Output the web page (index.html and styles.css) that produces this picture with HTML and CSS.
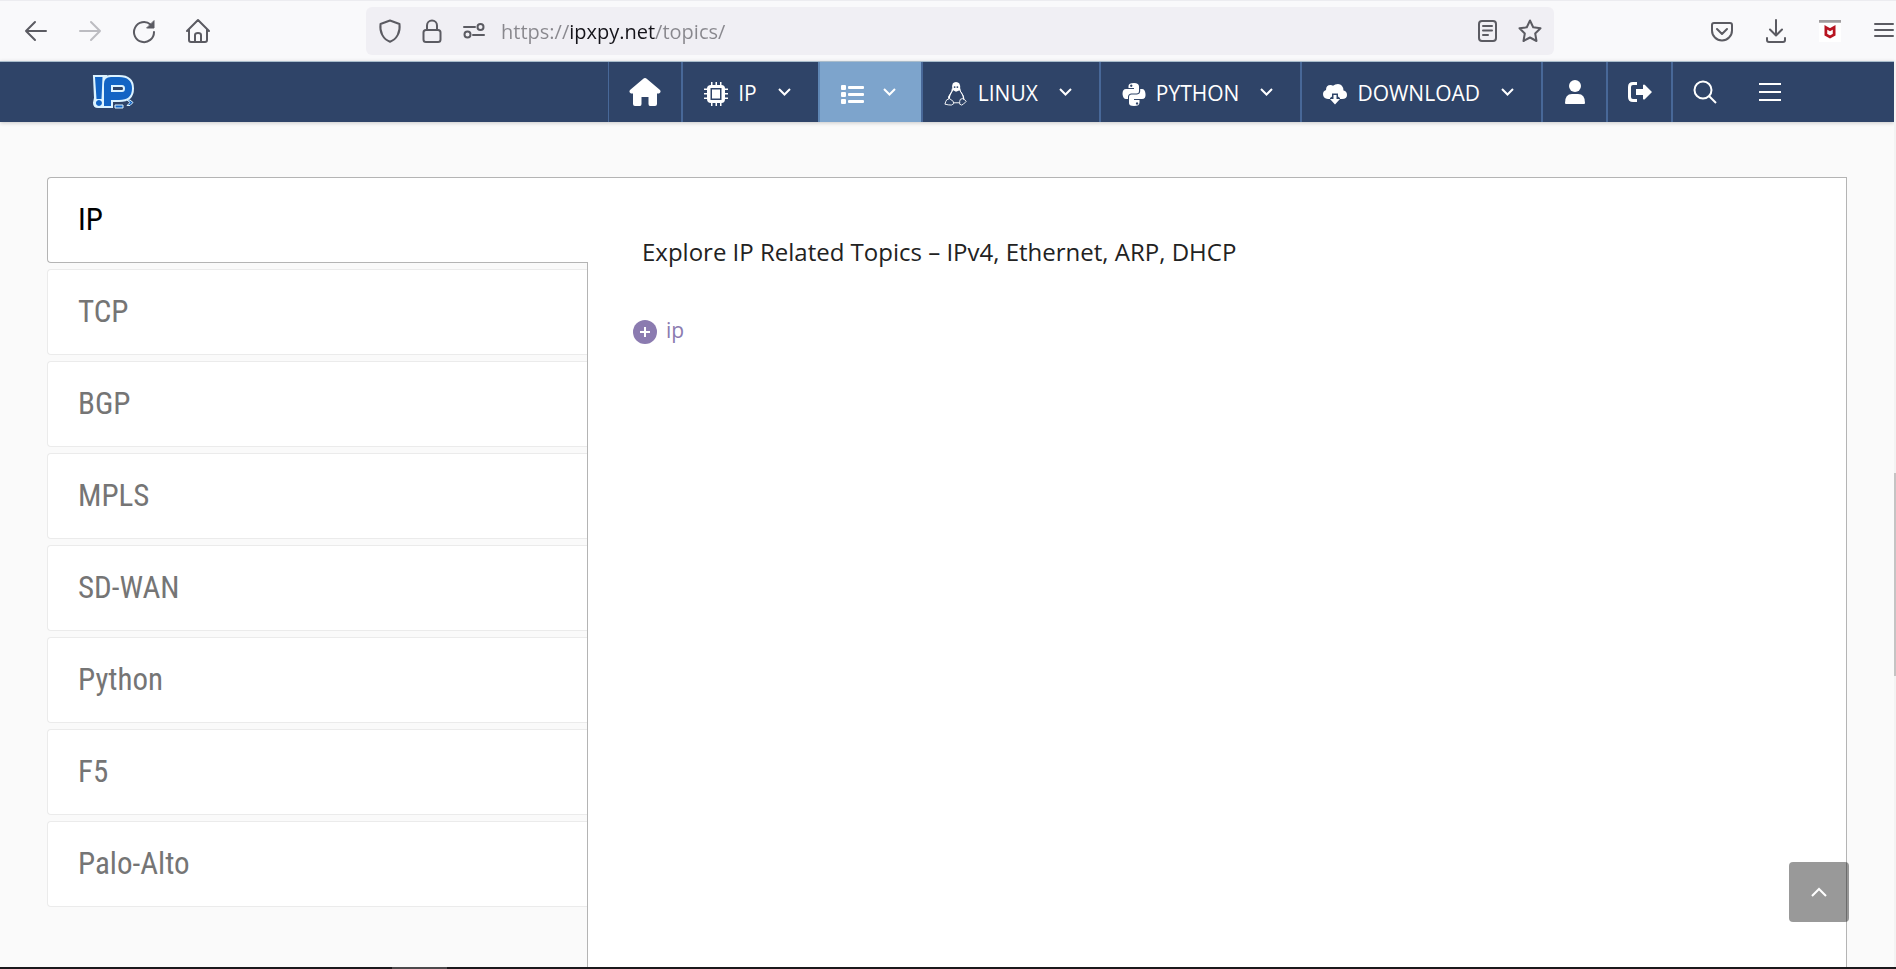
FILE: index.html
```html
<!DOCTYPE html>
<html lang="en">
<head>
<meta charset="utf-8">
<title>Topics</title>
<link rel="stylesheet" href="styles.css">
</head>
<body>
<div class="browser-bar">
  <div class="tools">
    <button class="tool" aria-label="Back"><svg viewBox="0 0 22 22"><path d="M21 11H1M10 2L1 11l9 9"/></svg></button>
    <button class="tool tool-off" aria-label="Forward"><svg viewBox="0 0 22 22"><path d="M1 11h20M12 2l9 9-9 9"/></svg></button>
    <button class="tool" aria-label="Reload"><svg viewBox="0 0 22 22"><path d="M21 12a10 10 0 1 1-3.500-7.500"/><path class="solid" d="M21 1v7h-7z"/></svg></button>
    <button class="tool" aria-label="Home"><svg viewBox="0 0 22 22"><path d="M0 11L11 0l11 11M2 9.500V20q0 2 2 2h14q2 0 2-2V9.500M8 21.500V15q0-2 3-2t3 2v6.500"/></svg></button>
  </div>
  <div class="address">
    <button class="tool" aria-label="Tracking protection"><svg viewBox="0 0 22 24"><path d="M11 1.500L20.500 5C21.500 13 18 20 11 22.800C4 20 .5 13 1.500 5z"/></svg></button>
    <button class="tool" aria-label="Site security"><svg viewBox="0 0 22 24"><rect x="2.500" y="11" width="17" height="12" rx="2.500"/><path d="M6 11V6.500a5 5 0 0 1 10 0V11"/></svg></button>
    <button class="tool" aria-label="Permissions"><svg viewBox="0 0 22 24"><path d="M1 8h11M10 16h11"/><circle cx="17.500" cy="8" r="3"/><circle cx="4.500" cy="15.500" r="3"/></svg></button>
    <input class="url" type="text" aria-label="Address" value="https://ipxpy.net/topics/">
    <button class="tool" aria-label="Reader view"><svg viewBox="0 0 22 24"><rect x="3" y="2" width="17" height="20" rx="3"/><path d="M7 7h9M7 11.500h9M7 16h5"/></svg></button>
    <button class="tool tool-star" aria-label="Bookmark"><svg viewBox="0 0 24 24"><path d="M12 1.500l3.200 6.800 7.300 1-5.300 5.200 1.300 7.500-6.500-3.500L5.500 22l1.300-7.500L1.500 9.300l7.300-1z"/></svg></button>
  </div>
  <div class="tools">
    <button class="tool" aria-label="Save to Pocket"><svg viewBox="0 0 22 22"><path d="M3 3h16q2 0 2 2v5.500a10 10 0 0 1-20 0V5q0-2 2-2zM6 9l5 5 5-5"/></svg></button>
    <button class="tool" aria-label="Downloads"><svg viewBox="0 0 22 22"><path d="M11 0v15M5 9.500l6 6 6-6M2 18v2q0 2 2 2h14q2 0 2-2v-2"/></svg></button>
    <button class="tool" aria-label="Web advisor"><svg viewBox="0 0 24 24"><path class="white" d="M0 3h24v21H0z"/><path class="grey" d="M0 0h24v3H0z"/><path class="red" d="M7.500 8L12 10.500l4.500-2.500v8L12 18.500l-4.500-2.500z"/></svg></button>
    <button class="tool" aria-label="Menu"><svg viewBox="0 0 22 22"><path d="M2 4h18M2 10h18M2 16h18"/></svg></button>
  </div>
</div>

<nav class="site-nav">
  <a class="brand" href="#" aria-label="IP home"><svg viewBox="0 0 44 36"><path class="halo" d="M3 3h10v29h-1L6 32q-3 0-3-3l1-5zM12 32V9q0-6 6-6h9q13 0 13 11.500T27 26h-8v6z"/><path class="mark" d="M3 3h7.500L9.500 25h-5zM7 26a3 3 0 1 1-.1 0z"/><path class="mark" d="M12 32V10q0-7 7-7h8q13 0 13 11.500T27 26h-8v6z"/><path class="hole" d="M20 12h10q2 0 2 2.500t-2 2.500H20z"/><path class="trail" d="M23 31h8v3h-8zM35 26h3l3 2.500-3 3h-3l3-3z"/></svg></a>
  <ul class="menu">
    <li><a class="item item-home" href="#" aria-label="Home"><svg class="home-icon" viewBox="0 0 32 28"><path d="M16 0q1 0 2 1l13 11q1.500 2-1 3.500h-2V26q0 2-2 2h-5q-1.500 0-1.500-2v-7h-7v7q0 2-1.500 2H6q-2 0-2-2V15.500H2Q-.5 14 1 12L14 1q1-1 2-1z"/></svg></a></li>
    <li><a class="item" href="#"><svg class="icon" viewBox="0 0 24 24"><path fill-rule="evenodd" d="M7 0h1.500v3h3V0H13v3h3V0h1.500v3q3.500 0 3.500 3.500h3V8h-3v3h3v1.500h-3v3h3V17h-3q0 4-3.500 4v3H16v-3h-3v3h-1.500v-3h-3v3H7v-3q-4 0-4-4H0v-1.500h3v-3H0V11h3V8H0V6.500h3Q3 3 7 3zM6.500 6v12h11V6zM8 7.500h8v9H8z"/></svg><span>IP</span><svg class="chevron" viewBox="0 0 13 8"><path d="M1 1l5.500 5.500L12 1"/></svg></a></li>
    <li><a class="item item-active" href="#" aria-label="Topics"><svg class="icon" viewBox="0 0 24 24"><rect x="0" y="3" width="5" height="5" rx="1"/><rect x="0" y="10" width="5" height="5" rx="1"/><rect x="0" y="17" width="5" height="5" rx="1"/><rect x="7" y="4" width="16" height="3" rx="1"/><rect x="7" y="11" width="16" height="3" rx="1"/><rect x="7" y="18" width="16" height="3" rx="1"/></svg><svg class="chevron" viewBox="0 0 13 8"><path d="M1 1l5.500 5.500L12 1"/></svg></a></li>
    <li><a class="item" href="#"><svg class="icon" viewBox="0 0 24 26"><path class="thin" d="M8 7q0 3-2 6-2.500 3-2 5M16 7q0 3 2 5 3 4 2.500 7M9.500 22.500h6M5 18q-4 1-4 3l-1 3q4 1 7 1 4-1 2-4zM19 18q-3 0-3 3v3q2 2 4 0l3-3q-1-2-4-3z"/><path d="M8 7Q7 0 12 0t4.500 7q0 3 2 5 3 4 2.500 7l-1.500-1q0-4-3.500-9l-4 1.500L9 9q-4 6-3.500 9l-2-.5Q3.500 15 6 12q2-2 2-5z"/><circle class="eye" cx="10.500" cy="5.500" r="1"/><circle class="eye" cx="13.500" cy="5.500" r="1"/></svg><span>LINUX</span><svg class="chevron" viewBox="0 0 13 8"><path d="M1 1l5.500 5.500L12 1"/></svg></a></li>
    <li><a class="item" href="#"><svg class="icon" viewBox="0 0 24 24"><path fill-rule="evenodd" d="M12 1q5 0 5 3.500V9q0 2.500-2.500 2.500H9Q6 12 6 15v2H4q-3 0-3.500-5Q.5 7 4 7h8V6H6.500V4Q6.500 1 12 1zM9.200 2.500a1.200 1.200 0 1 0 .1 0z"/><path fill-rule="evenodd" d="M18.200 7H20q3 0 3.500 5t-3.500 5h-8v1h5.500v2.500q0 3.500-5.500 3.500T7 20.500V15q0-2.500 2.500-2.500H15Q18.200 12 18.200 9zM15 20.300a1.200 1.200 0 1 0 .1 0z"/></svg><span>PYTHON</span><svg class="chevron" viewBox="0 0 13 8"><path d="M1 1l5.500 5.500L12 1"/></svg></a></li>
    <li><a class="item" href="#"><svg class="icon" viewBox="0 0 24 24"><path d="M5 17q-5-.5-5-5 0-3 3-4Q3 3 7.500 3q1.500 0 2.500.8Q12 2 15 2q5 0 5.500 6.500Q24 9 24 13q0 4-5 4h-2v-1l-2-1.500v-3H9v3L7 16v1z"/><path d="M10.500 13h3v4H17l-5 5.500L7 17h3.500z"/></svg><span>DOWNLOAD</span><svg class="chevron" viewBox="0 0 13 8"><path d="M1 1l5.500 5.500L12 1"/></svg></a></li>
    <li><a class="item item-small" href="#" aria-label="Account"><svg class="icon" viewBox="0 0 24 24"><circle cx="12" cy="6" r="6"/><path d="M2 23q0-9 7-9h6q7 0 7 9 0 1-1 1H3q-1 0-1-1z"/></svg></a></li>
    <li><a class="item item-small" href="#" aria-label="Log out"><svg class="icon" viewBox="0 0 24 24"><path class="bar" d="M9 3.500H5q-3.500 0-3.500 3.500v10q0 3.500 3.500 3.500h4"/><path d="M8 9h7V5q1-1 2 0l7 7-7 7q-1 1-2 0v-4H8z"/></svg></a></li>
    <li><button class="item item-small" aria-label="Search"><svg class="icon line" viewBox="0 0 24 24"><circle cx="10" cy="10" r="8.500"/><path d="M16 16l7 7"/></svg></button></li>
    <li><button class="item item-small item-last" aria-label="More"><svg class="icon line" viewBox="0 0 24 24"><path d="M1 4h22M1 12h22M1 20h22"/></svg></button></li>
  </ul>
</nav>

<main class="topics">
  <div class="tabs" role="tablist">
    <button class="tab tab-current" role="tab" aria-selected="true">IP</button>
    <button class="tab" role="tab">TCP</button>
    <button class="tab" role="tab">BGP</button>
    <button class="tab" role="tab">MPLS</button>
    <button class="tab" role="tab">SD-WAN</button>
    <button class="tab" role="tab">Python</button>
    <button class="tab" role="tab">F5</button>
    <button class="tab" role="tab">Palo-Alto</button>
  </div>
  <section class="panel" role="tabpanel">
    <p class="intro">Explore IP Related Topics – IPv4, Ethernet, ARP, DHCP</p>
    <a class="topic-link" href="#"><svg viewBox="0 0 24 24"><circle cx="12" cy="12" r="12"/><path d="M12 7v10M7 12h10"/></svg><span>ip</span></a>
  </section>
</main>
<footer class="bottom-edge"><span class="bottom-mark"></span></footer>
<div class="scroll-track"><span class="scroll-thumb"></span></div>
<button class="to-top" aria-label="Back to top"><svg viewBox="0 0 18 11"><path d="M2 9l7-7 7 7"/></svg></button>
</body>
</html>
```
FILE: styles.css
```css
* { box-sizing: border-box; }

body {
  margin: 0;
  height: 100vh;
  display: flex;
  flex-direction: column;
  overflow: hidden;
  background: #fafafa;
  font-family: "Open Sans", "Noto Sans", sans-serif;
}

button {
  border: 0;
  padding: 0;
  background: none;
  font: inherit;
  cursor: pointer;
}

a { text-decoration: none; }
svg { display: block; overflow: visible; }

/* Browser toolbar */
.browser-bar {
  flex: none;
  display: flex;
  align-items: center;
  padding: 6px 1px 6px 25px;
  border-top: 1px solid #ececf0;
  background: #f9f9fb;
}

.tools { display: flex; gap: 32px; }
.tool { flex: none; width: 22px; }

.tool svg {
  width: 100%;
  fill: none;
  stroke: #5b5b62;
  stroke-width: 2;
  stroke-linecap: round;
  stroke-linejoin: round;
}

.tool-off svg { stroke: #bcbcc1; }
.tool .solid { fill: #5b5b62; stroke-width: 1; }
.tool .white { fill: #fff; stroke: none; }
.tool .grey { fill: #a09c9e; stroke: none; }
.tool .red { stroke: #b81421; stroke-width: 3; stroke-linejoin: miter; }

.address {
  flex: 1;
  display: flex;
  align-items: center;
  gap: 20px;
  height: 48px;
  margin: 0 157px 0 157px;
  padding: 0 12px 0 13px;
  border-radius: 6px;
  background: #f0eff4;
}

.tool-star { width: 24px; }

.url {
  flex: 1;
  min-width: 0;
  height: 40px;
  margin-left: -4px;
  padding: 0;
  border: 0;
  outline: 0;
  font-family: inherit;
  font-size: 20px;
  color: #15141a;
  background: linear-gradient(90deg, #88878d 68px, #15141a 68px, #15141a 154px, #88878d 154px);
  background-clip: text;
  -webkit-background-clip: text;
  -webkit-text-fill-color: transparent;
}

/* Site navigation */
.site-nav {
  flex: none;
  display: flex;
  align-items: center;
  justify-content: space-between;
  height: 61px;
  margin-right: 2px;
  padding: 0 93px 0 92px;
  border-top: 1px solid #a9bccb;
  background: #2f4468;
  box-shadow: 0 1px 4px rgba(0, 0, 0, 0.2);
}

.brand svg { width: 44px; height: 36px; }
.halo { fill: #dcf3ff; stroke: #dcf3ff; stroke-width: 4; }
.mark { fill: #1264c4; }
.hole { fill: #2f4468; stroke: #dcf3ff; stroke-width: 2; }
.trail { fill: #1264c4; stroke: #dcf3ff; stroke-width: 1; }

.menu {
  display: flex;
  margin: 0;
  padding: 0;
  list-style: none;
}

.item {
  display: flex;
  align-items: center;
  height: 60px;
  padding: 0 27px 0 21px;
  border-left: 2px solid #486898;
  color: #fff;
  font-size: 21px;
}

.item span { margin: 2px 0 0 10px; }
.item-home { padding: 0 20px; border-left-width: 1px; }
.item-small { padding: 0 19px 0 20px; }
.item-last { border-left-color: transparent; }
.item-active { padding-right: 25px; border-left-color: #5f87b5; background: #7da4cc; }
.icon { width: 24px; height: 24px; fill: #fff; }
.item span ~ .chevron { margin-left: 21px; }
.item-active .chevron { margin-left: 18px; }
.item:not(.item-small) .icon { margin-top: 4px; }
.home-icon { width: 32px; height: 28px; fill: #fff; }
.chevron { width: 13px; height: 8px; fill: none; stroke: #fff; stroke-width: 2; }
.line, .bar { fill: none; stroke: #fff; stroke-width: 2; }
.bar { stroke-width: 3; }
.thin { fill: none; stroke: #fff; stroke-width: 1; }
.eye { fill: #2f4468; }

/* Topic tabs */
.topics {
  flex: 1;
  min-height: 0;
  display: flex;
  padding: 55px 49px 0 47px;
}

.tabs {
  flex: 0 0 30%;
  display: flex;
  flex-direction: column;
  gap: 6px;
}

.tab {
  flex: none;
  height: 86px;
  padding: 0 30px 2px;
  border: 1px solid #ebebeb;
  border-right: 0;
  border-radius: 4px 0 0 4px;
  background: #fff;
  color: #757575;
  font-family: "Roboto Condensed", "Roboto", sans-serif;
  font-size: 31px;
  text-align: left;
}

.tab-current {
  z-index: 1;
  margin-right: -1px;
  border-color: #b4b4b4;
  color: #000;
}

.panel {
  flex: 1;
  padding: 56px 45px;
  border: 1px solid #b4b4b4;
  border-bottom: 0;
  background: #fff;
}

.intro {
  margin: 0 0 44px;
  padding-left: 9px;
  color: #222;
  font-size: 24px;
  line-height: 36px;
}

.topic-link {
  display: inline-flex;
  align-items: center;
  gap: 9px;
  color: #8b7bb0;
  font-size: 21px;
  line-height: 32px;
}

.topic-link svg { width: 24px; height: 24px; margin-top: 4px; fill: #8b7bb0; stroke-width: 2; }
.topic-link path { stroke: #fff; }

/* Window edges */
.bottom-edge {
  flex: none;
  display: flex;
  height: 2px;
  padding-left: 392px;
  background: #1b191c;
}

.bottom-mark { width: 55px; background: #4c4a4c; }

.scroll-track {
  position: fixed;
  top: 62px;
  right: 0;
  bottom: 2px;
  width: 2px;
  background: #f3f3f3;
}

.scroll-thumb {
  display: block;
  height: 203px;
  margin-top: 411px;
  background: #c4c4c4;
}

.to-top {
  position: fixed;
  right: 47px;
  bottom: 47px;
  display: grid;
  place-items: center;
  width: 60px;
  height: 60px;
  border-radius: 4px;
  background: rgba(0, 0, 0, 0.4);
}

.to-top svg { width: 18px; height: 11px; fill: none; stroke: #fff; stroke-width: 2; }
```
